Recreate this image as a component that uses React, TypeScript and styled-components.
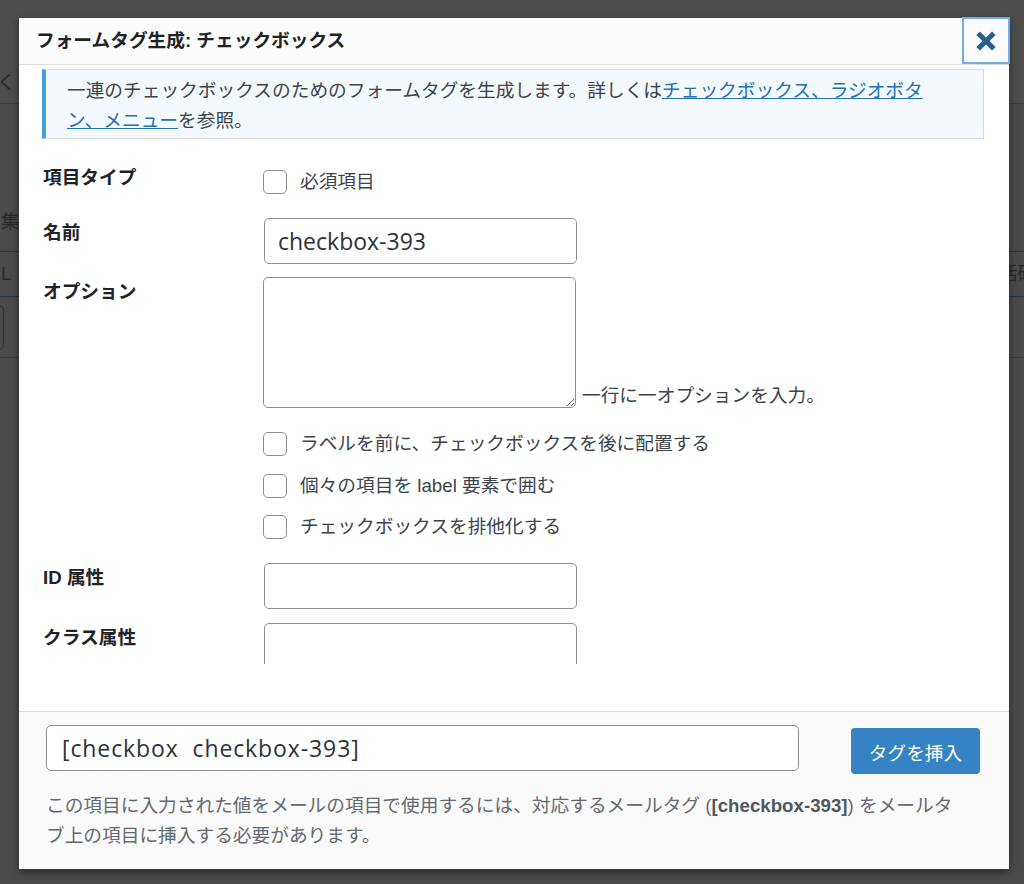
import styled, { createGlobalStyle } from "styled-components";

const GlobalStyle = createGlobalStyle`
  html, body {
    margin: 0;
    padding: 0;
  }
  body {
    background: #4a4a4a;
    font-family: "Liberation Sans", "Noto Sans CJK JP", sans-serif;
    font-size: 18.7px;
    color: #3c434a;
    overflow: hidden;
  }
  * {
    box-sizing: border-box;
  }
`;

const Page = styled.div`
  position: relative;
  width: 1024px;
  height: 884px;
  overflow: hidden;
  background: #4a4a4a;
`;

/* dimmed admin screen behind the modal */
const Backdrop = styled.div`
  display: flex;
  flex-direction: column;
  color: #26292c;
  line-height: 30px;
`;

const BackTitleBar = styled.div`
  height: 104px;
  display: flex;
  align-items: flex-end;
  padding: 0 0 5px 0;
  border-bottom: 1px solid #3c3c3c;
  background: #4c4c4c;

  span {
    margin-left: -3px;
  }
`;

const BackHeading = styled.div`
  margin-top: 103px;
  padding-left: 1px;
`;

const BackTabs = styled.div`
  margin-top: 14px;
  height: 46px;
  display: flex;
  align-items: center;
  justify-content: space-between;
  border-top: 1px solid #203447;
  border-bottom: 1px solid #203447;

  span:first-child {
    margin-left: 1px;
  }
  span:last-child {
    margin-right: -12px;
  }
`;

const BackButton = styled.div`
  margin: 8px 0 0 -100px;
  width: 104px;
  height: 45px;
  border: 1.5px solid #203447;
  border-radius: 5px;
`;

const BackRule = styled.div`
  margin-top: 7px;
  height: 1px;
  background: #3a3a3a;
`;

const Modal = styled.div`
  position: absolute;
  top: 18px;
  left: 19px;
  width: 990px;
  height: 851px;
  background: #fff;
  box-shadow: 0 3px 8px rgba(0, 0, 0, 0.45);
  display: flex;
  flex-direction: column;
`;

const Header = styled.header`
  position: relative;
  flex: none;
  height: 47px;
  display: flex;
  align-items: center;
  padding-left: 17px;
  background: #fcfcfc;
  border-bottom: 1px solid #dcdcde;
`;

const Title = styled.h1`
  margin: 0;
  font-size: 18.7px;
  font-weight: 700;
  color: #1d2327;
  line-height: 30px;
`;

const CloseButton = styled.button`
  position: absolute;
  top: -1px;
  right: -1px;
  width: 48px;
  height: 47px;
  padding: 0;
  display: flex;
  align-items: center;
  justify-content: center;
  background: #fcfcfc;
  border: 2px solid #72aee6;
  color: #285f8f;
  cursor: pointer;
`;

const Body = styled.div`
  flex: 1;
  display: flex;
  flex-direction: column;
`;

const ScrollArea = styled.div`
  height: 599px;
  overflow: hidden;
  padding: 4px 25px 0 23px;
`;

const Notice = styled.div`
  padding: 6px 36px 2px 21px;
  background: #f4f9fd;
  border: 1px solid #dcdcde;
  border-left: 4px solid #47a1d8;
  line-height: 30px;
  color: #3c434a;

  a {
    color: #2271b1;
    text-decoration: underline;
  }
`;

const FormTable = styled.div`
  display: flex;
  flex-direction: column;
  padding: 24px 0 0 1px;
`;

const Row = styled.div<{ $gap: number }>`
  display: grid;
  grid-template-columns: 220px 1fr;
  align-items: start;
  padding-bottom: ${(p) => p.$gap}px;
`;

const RowLabel = styled.div`
  margin-top: 3px;
  line-height: 24px;
  font-weight: 700;
  color: #1d2327;
`;

const Field = styled.div<{ $inset?: number }>`
  padding-top: ${(p) => p.$inset ?? 0}px;
`;

const TextInput = styled.input`
  display: block;
  width: 313px;
  height: 46px;
  margin: 0 0 0 1px;
  padding: 0 13px;
  border: 1px solid #8c8f94;
  border-radius: 5px;
  background: #fff;
  font-family: "Open Sans", "Noto Sans CJK JP", sans-serif;
  font-size: 23px;
  color: #2c3338;
  outline: none;
`;

const OptionLine = styled.div`
  display: flex;
  align-items: flex-end;
  gap: 6px;
`;

const OptionArea = styled.textarea`
  display: block;
  width: 313px;
  height: 131px;
  margin: 0;
  border: 1px solid #8c8f94;
  border-radius: 5px;
  background: #fff;
  resize: both;
  outline: none;
`;

const Hint = styled.span`
  line-height: 24px;
`;

const CheckList = styled.div`
  display: flex;
  flex-direction: column;
  gap: 17.5px;
  margin-top: 24px;
`;

const CheckLine = styled.label`
  display: flex;
  align-items: center;
  gap: 13px;
  height: 24px;
  line-height: 24px;
  color: #3c434a;
`;

const CheckBox = styled.input.attrs({ type: "checkbox" })`
  appearance: none;
  flex: none;
  width: 24px;
  height: 24px;
  margin: 0;
  border: 1px solid #8c8f94;
  border-radius: 5px;
  background: #fff;
`;

const Footer = styled.footer`
  flex: none;
  height: 158px;
  padding: 13px 28px 0 27px;
  background: #fafafa;
  border-top: 1px solid #dcdcde;
`;

const FooterTop = styled.div`
  display: flex;
  align-items: flex-start;
  justify-content: space-between;
`;

const TagInput = styled.input`
  width: 753px;
  height: 46px;
  margin: 0;
  padding: 0 15px;
  border: 1px solid #8c8f94;
  border-radius: 5px;
  background: #fff;
  font-family: "Open Sans", "Noto Sans CJK JP", sans-serif;
  font-size: 23px;
  letter-spacing: 0.9px;
  color: #2c3338;
  outline: none;
`;

const InsertButton = styled.button`
  width: 129px;
  height: 46px;
  margin: 3px 1px 0 0;
  border: none;
  border-radius: 4px;
  background: #3582c4;
  color: #fff;
  font-family: inherit;
  font-size: 18.7px;
  cursor: pointer;
`;

const Description = styled.p`
  max-width: 918px;
  margin: 17px 0 0;
  line-height: 30px;
  color: #646970;

  strong {
    color: #50575e;
  }
`;

const CloseIcon = () => (
  <svg width="34" height="34" viewBox="0 0 20 20" fill="currentColor">
    <path d="M12.12 10l3.53 3.53-2.12 2.12L10 12.12l-3.54 3.54-2.12-2.12L7.88 10 4.34 6.46l2.12-2.12L10 7.88l3.53-3.53 2.12 2.12z" />
  </svg>
);

const extraOptions = [
  "ラベルを前に、チェックボックスを後に配置する",
  "個々の項目を label 要素で囲む",
  "チェックボックスを排他化する",
];

export default function App() {
  return (
    <Page>
      <GlobalStyle />
      <Backdrop>
        <BackTitleBar>
          <span>くッ</span>
        </BackTitleBar>
        <BackHeading>集</BackHeading>
        <BackTabs>
          <span>L</span>
          <span>括研</span>
        </BackTabs>
        <BackButton />
        <BackRule />
      </Backdrop>

      <Modal>
        <Header>
          <Title>フォームタグ生成: チェックボックス</Title>
          <CloseButton aria-label="閉じる">
            <CloseIcon />
          </CloseButton>
        </Header>

        <Body>
          <ScrollArea>
            <Notice>
              一連のチェックボックスのためのフォームタグを生成します。詳しくは
              <a href="#">チェックボックス、ラジオボタン、メニュー</a>を参照。
            </Notice>

            <FormTable>
              <Row $gap={24}>
                <RowLabel>項目タイプ</RowLabel>
                <Field $inset={7}>
                  <CheckLine>
                    <CheckBox />
                    必須項目
                  </CheckLine>
                </Field>
              </Row>

              <Row $gap={13}>
                <RowLabel>名前</RowLabel>
                <Field>
                  <TextInput defaultValue="checkbox-393" />
                </Field>
              </Row>

              <Row $gap={24}>
                <RowLabel>オプション</RowLabel>
                <Field>
                  <OptionLine>
                    <OptionArea />
                    <Hint>一行に一オプションを入力。</Hint>
                  </OptionLine>
                  <CheckList>
                    {extraOptions.map((text) => (
                      <CheckLine key={text}>
                        <CheckBox />
                        {text}
                      </CheckLine>
                    ))}
                  </CheckList>
                </Field>
              </Row>

              <Row $gap={14}>
                <RowLabel>ID 属性</RowLabel>
                <Field>
                  <TextInput />
                </Field>
              </Row>

              <Row $gap={14}>
                <RowLabel>クラス属性</RowLabel>
                <Field>
                  <TextInput />
                </Field>
              </Row>
            </FormTable>
          </ScrollArea>
        </Body>

        <Footer>
          <FooterTop>
            <TagInput readOnly value="[checkbox  checkbox-393]" />
            <InsertButton>タグを挿入</InsertButton>
          </FooterTop>
          <Description>
            この項目に入力された値をメールの項目で使用するには、対応するメールタグ (
            <strong>[checkbox-393]</strong>) をメールタブ上の項目に挿入する必要があります。
          </Description>
        </Footer>
      </Modal>
    </Page>
  );
}
